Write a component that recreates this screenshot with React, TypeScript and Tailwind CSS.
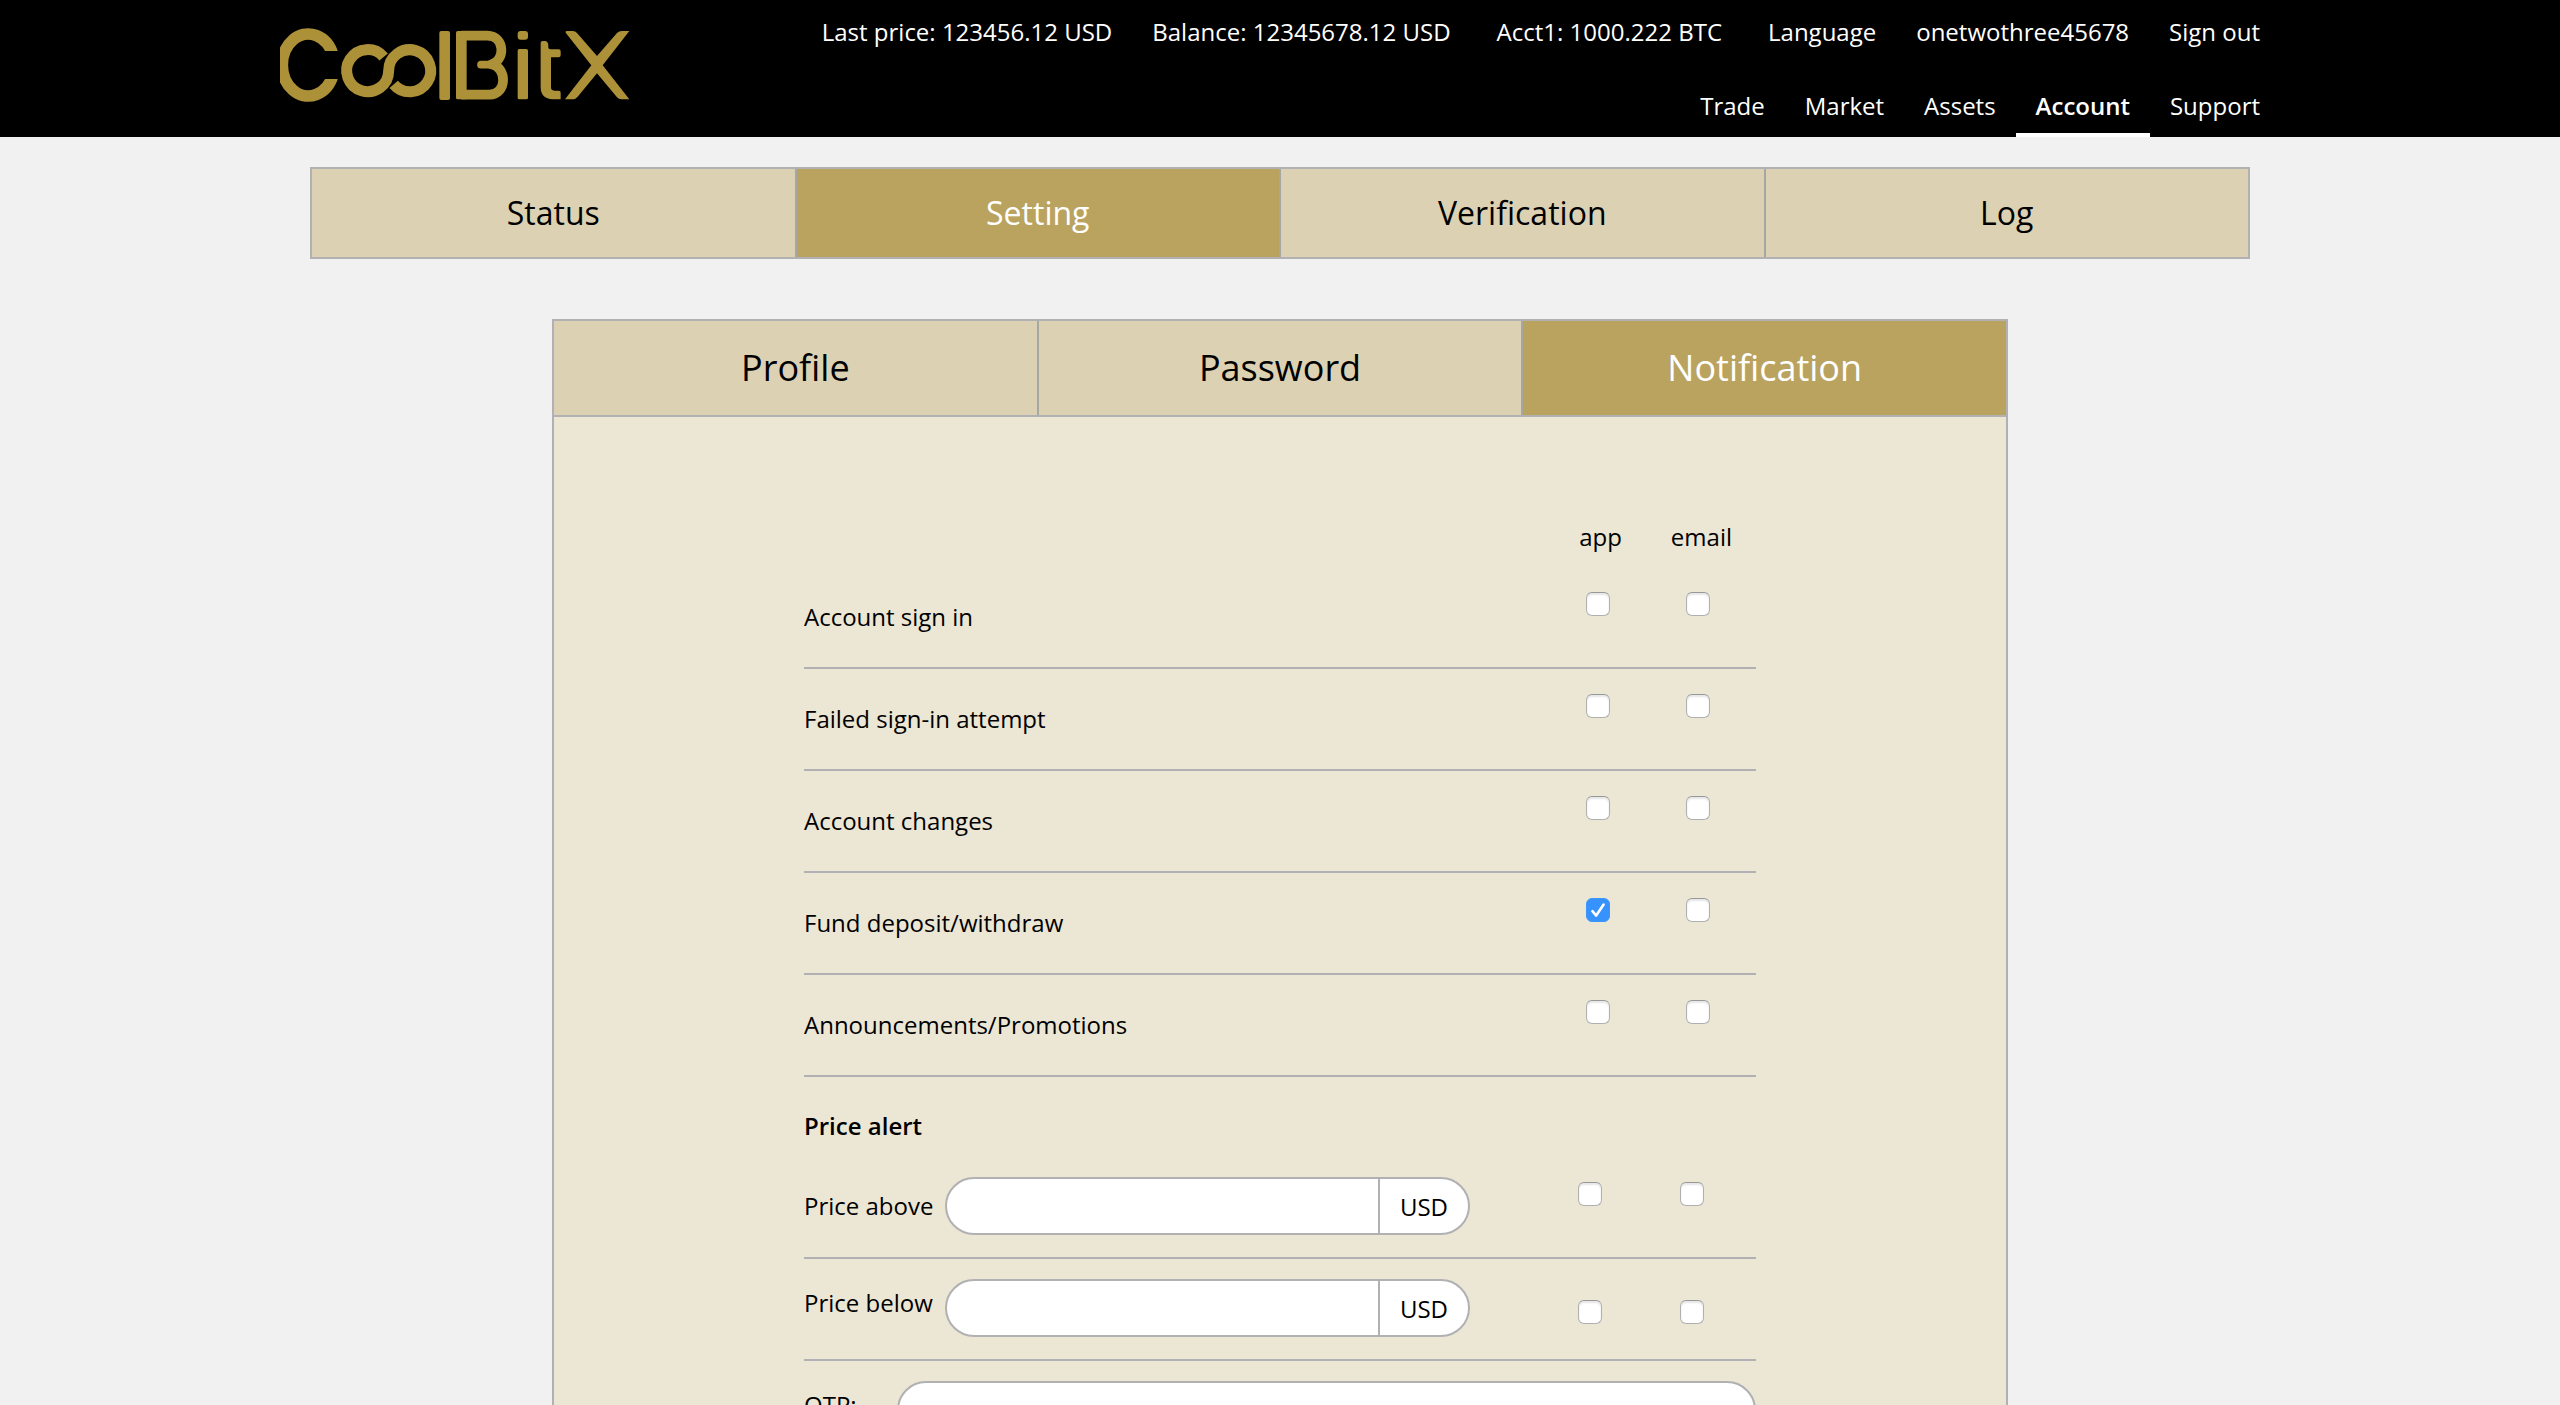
import { useState } from "react";

const account = [
  { text: "Last price: 123456.12 USD", pad: "px-5" },
  { text: "Balance: 12345678.12 USD", pad: "px-5" },
  { text: "Acct1: 1000.222 BTC", pad: "px-[26px]" },
];

const accountLinks = ["Language", "onetwothree45678", "Sign out"];
const mainNav = ["Trade", "Market", "Assets", "Account", "Support"];
const sections = ["Status", "Setting", "Verification", "Log"];
const settings = ["Profile", "Password", "Notification"];

const events = [
  { id: "sign-in", label: "Account sign in" },
  { id: "failed", label: "Failed sign-in attempt" },
  { id: "changes", label: "Account changes" },
  { id: "fund", label: "Fund deposit/withdraw", app: true },
  { id: "promo", label: "Announcements/Promotions" },
];

function Logo() {
  return (
    <svg viewBox="60 81 1056 228" className="h-[76px] w-[352px]" role="img" aria-label="CoolBitX">
      <g fill="none" stroke="#ad9139" strokeWidth="33">
        <path d="M219 166A78 93 0 1 0 219 224" strokeWidth="35" />
        <path d="M371 171A63 63 0 1 0 386 212A63 63 0 1 1 401 253" />
        <path d="M604 107H682C736 108 736 182 694 193C742 202 742 283 688 284H604" strokeWidth="29" strokeLinejoin="round" />
        <path d="M663 194H694" strokeWidth="23" strokeLinecap="round" />
      </g>
      <path d="M190 153H243V237H190Z" fill="#000" />
      <g fill="#ad9139">
        <rect x="538" y="93" width="32" height="207" rx="6" />
        <rect x="588" y="93" width="32" height="205" rx="5" />
        <rect x="773" y="93" width="31" height="26" rx="9" />
        <rect x="773" y="147" width="31" height="151" rx="5" />
        <path d="M842 128Q842 123 848 123H856Q865 125 865 138V143Q866 148 872 148H896Q902 148 902 154V166Q902 172 896 172H873V262Q873 272 883 272H896Q902 272 902 278V298H878Q842 296 842 262Z" />
        <path d="M920 93H938Q946 93 951 99L1011 168L1071 99Q1077 93 1085 93H1108L1028 196L1108 298H1084Q1076 298 1071 292L1011 220L953 290Q946 298 938 298H915L994 196L917 98Q915 93 920 93Z" />
      </g>
    </svg>
  );
}

function Check({ label, initial = false }: { label: string; initial?: boolean }) {
  const [on, setOn] = useState(initial);
  return (
    <span className="relative block size-6">
      <input
        type="checkbox"
        aria-label={label}
        checked={on}
        onChange={(e) => setOn(e.target.checked)}
        className="block size-6 appearance-none rounded-[6px] border border-[#b0b0b0] border-t-[#989898] bg-white shadow-[inset_0_2px_2px_#e6e6e6] checked:border-[#3b97fd] checked:bg-[#3693fd] checked:shadow-none"
      />
      {on && (
        <svg viewBox="0 0 24 24" className="pointer-events-none absolute inset-0 size-6" fill="none" stroke="#fff" strokeWidth="2.6" strokeLinecap="round" strokeLinejoin="round">
          <path d="M6.4 13.2L10.2 17.6L17.6 6.6" />
        </svg>
      )}
    </span>
  );
}

function Tabs({ items, active, className, label }: { items: string[]; active: string; className: string; label: string }) {
  return (
    <nav aria-label={label} className={`flex divide-x-2 divide-[#a6a6a6] border-2 border-[#b1b1b3] ${className}`}>
      {items.map((item) => (
        <button
          key={item}
          type="button"
          aria-current={item === active ? "page" : undefined}
          className={`flex-1 ${item === active ? "bg-[#baa35f] font-medium text-white" : "bg-[#dcd1b2] text-black"}`}
        >
          {item}
        </button>
      ))}
    </nav>
  );
}

function PriceRow({ id, label, labelClass, checkClass }: { id: string; label: string; labelClass: string; checkClass: string }) {
  return (
    <div className="flex h-[102px] items-start border-b-2 border-[#b1b1b3] pt-5 pr-[52px]">
      <div className="flex w-[666px] items-start gap-3">
        <label htmlFor={id} className={labelClass}>{label}</label>
        <div className="flex h-[58px] flex-1 overflow-hidden rounded-full border-2 border-[#b1b1b3] bg-white">
          <input id={id} type="text" className="min-w-0 flex-1 px-6 outline-none" />
          <span className="flex w-[90px] items-center justify-center border-l-2 border-[#b1b1b3] pt-0.5">USD</span>
        </div>
      </div>
      <div className={`ml-auto flex gap-[78px] ${checkClass}`}>
        <Check label={`${label}, app`} />
        <Check label={`${label}, email`} />
      </div>
    </div>
  );
}

export default function App() {
  return (
    <div className="h-screen overflow-hidden bg-[#f1f1f1] font-['Open_Sans','Noto_Sans',sans-serif] text-[24px] leading-8 text-black">
      <header className="bg-black text-white">
        <div className="mx-auto flex h-[137px] max-w-[2000px] items-start justify-between">
          <a href="#home" className="pt-[27px]"><Logo /></a>
          <div className="flex h-full flex-col items-end justify-between pt-4 font-medium">
            <div className="flex">
              {account.map((a) => <span key={a.text} className={a.pad}>{a.text}</span>)}
              {accountLinks.map((l) => <a key={l} href="#account" className="px-5">{l}</a>)}
            </div>
            <nav aria-label="Main" className="flex">
              {mainNav.map((n) => (
                <a
                  key={n}
                  href="#nav"
                  className={`h-[47px] border-b-4 px-5 ${n === "Account" ? "border-white font-semibold" : "border-transparent"}`}
                >
                  {n}
                </a>
              ))}
            </nav>
          </div>
        </div>
      </header>

      <main className="mx-auto max-w-[1940px] pt-[30px]">
        <Tabs label="Account sections" items={sections} active="Setting" className="h-[92px] text-[32px]" />

        <div className="mx-auto mt-[60px] max-w-[1456px]">
          <Tabs label="Settings" items={settings} active="Notification" className="h-[98px] text-[36px]" />
          <form className="border-x-2 border-[#b1b1b3] bg-[#ece6d5] pt-[104px]">
            <div className="mx-auto max-w-[952px]">
              <div className="flex h-[46px] justify-end gap-[49px] pr-6">
                <span>app</span>
                <span>email</span>
              </div>
              {events.map((e) => (
                <div key={e.id} className="flex h-[102px] items-center justify-between border-b-2 border-[#b1b1b3] pr-[46px]">
                  <span>{e.label}</span>
                  <div className="mt-[25px] flex gap-[76px] self-start">
                    <Check label={`${e.label}, app`} initial={e.app} />
                    <Check label={`${e.label}, email`} />
                  </div>
                </div>
              ))}
              <h2 className="h-20 pt-[33px] font-semibold">Price alert</h2>
              <PriceRow id="above" label="Price above" labelClass="pt-[13px]" checkClass="pt-[5px]" />
              <PriceRow id="below" label="Price below" labelClass="pt-2" checkClass="pt-[21px]" />
              <div className="flex items-start gap-10 pt-5 pb-20">
                <label htmlFor="otp" className="pt-2">OTP:</label>
                <input id="otp" type="text" className="h-[58px] min-w-0 flex-1 rounded-full border-2 border-[#b1b1b3] bg-white px-6 outline-none" />
              </div>
            </div>
          </form>
        </div>
      </main>
    </div>
  );
}
